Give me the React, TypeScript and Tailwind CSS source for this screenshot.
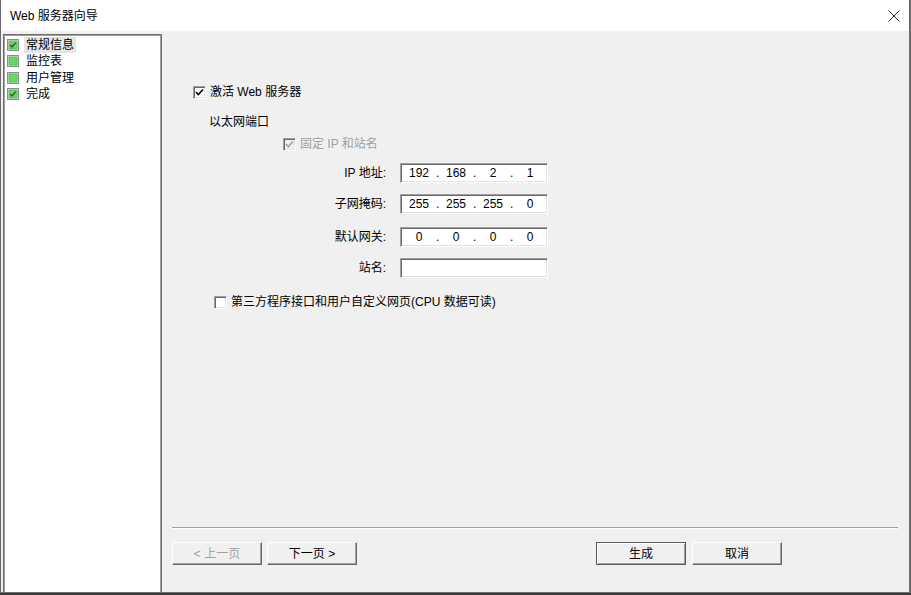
import type { ReactNode } from 'react';

const FONT = 'font-["Liberation_Sans","Noto_Sans_CJK_SC",sans-serif]';

function TreeIcon({ checked }: { checked: boolean }) {
  return (
    <svg width="12" height="12" viewBox="0 0 12 12" className="shrink-0">
      <rect x="0.5" y="0.5" width="11" height="11" fill="#d8d8d8" stroke="#8c8c8c" />
      <rect x="2" y="2" width="8" height="8" fill="#66d866" stroke="#3fae3f" strokeWidth="0.6" />
      {checked && <path d="M3.2 6 L5 7.9 L8.8 3.6" fill="none" stroke="#1f5f1f" strokeWidth="1.4" />}
    </svg>
  );
}

function TreeItem({ label, checked, selected }: { label: string; checked: boolean; selected?: boolean }) {
  return (
    <div className="flex items-center h-[16.3px] pl-[2px]">
      <TreeIcon checked={checked} />
      <span className={`ml-[5px] px-[2px] leading-[16px] ${selected ? 'bg-[#e5e5e5]' : ''}`}>{label}</span>
    </div>
  );
}

function CheckBox({ checked, disabled }: { checked: boolean; disabled?: boolean }) {
  return (
    <div
      className={`w-[13px] h-[13px] shrink-0 border border-t-[#a0a0a0] border-l-[#a0a0a0] border-r-white border-b-white shadow-[inset_1px_1px_0_#696969,inset_-1px_-1px_0_#e3e3e3] flex items-center justify-center ${
        disabled ? 'bg-[#f0f0f0]' : 'bg-white'
      }`}
    >
      {checked && (
        <svg width="9" height="9" viewBox="0 0 9 9">
          <path d="M1 4 L3.3 6.5 L8 1.5" fill="none" stroke={disabled ? '#a0a0a0' : '#000'} strokeWidth="1.6" />
        </svg>
      )}
    </div>
  );
}

function Field({ children }: { children?: ReactNode }) {
  return (
    <div className="w-[148px] h-[20px] bg-white border border-t-[#a0a0a0] border-l-[#a0a0a0] border-r-white border-b-white shadow-[inset_1px_1px_0_#696969,inset_-1px_-1px_0_#e3e3e3] flex items-center pl-[1px]">
      {children}
    </div>
  );
}

function IpField({ parts }: { parts: string[] }) {
  return (
    <Field>
      {parts.map((p, i) => (
        <div key={i} className="flex items-center">
          {i > 0 && <span className="w-[3px] text-center">.</span>}
          <span className="w-[34px] text-center">{p}</span>
        </div>
      ))}
    </Field>
  );
}

function FormRow({ label, children, className = '' }: { label: string; children: ReactNode; className?: string }) {
  return (
    <div className={`flex items-center h-[20px] ml-[139px] ${className}`}>
      <span className="w-[85px] text-right">{label}</span>
      <div className="ml-[14px]">{children}</div>
    </div>
  );
}

function Button({ label, disabled, isDefault }: { label: string; disabled?: boolean; isDefault?: boolean }) {
  return (
    <div
      className={`w-[90px] h-[23px] bg-[#f0f0f0] flex items-center justify-center ${
        isDefault
          ? 'border border-[#5a5a5a] shadow-[inset_1px_1px_0_#fff,inset_-1px_-1px_0_#a0a0a0]'
          : 'border border-t-white border-l-white border-r-[#696969] border-b-[#696969] shadow-[inset_-1px_-1px_0_#a0a0a0]'
      } ${disabled ? 'text-[#a0a0a0]' : 'text-black'}`}
    >
      {label}
    </div>
  );
}

export default function App() {
  return (
    <div className={`w-[911px] h-[595px] bg-[#3a3a3a] text-[12px] text-black ${FONT}`}>
      <div className="w-[911px] h-[593px] flex flex-col bg-white border-r-2 border-b border-l border-[#6b6b6b]">
        {/* title bar */}
        <div className="h-[31px] flex items-center justify-between pl-[9px] pr-[9px] bg-white">
          <span className="text-[12px]">Web 服务器向导</span>
          <svg width="12" height="12" viewBox="0 0 12 12">
            <path d="M0.5 0.5 L11.5 11.5 M11.5 0.5 L0.5 11.5" stroke="#222" strokeWidth="1" />
          </svg>
        </div>

        <div className="flex-1 flex bg-[#f0f0f0] pl-[2px] pt-[3px]">
          {/* tree panel */}
          <div className="w-[159px] bg-white border border-[#6d6d6d] border-b-0 shadow-[inset_1px_1px_0_#a0a0a0,inset_-1px_0_0_#a0a0a0] pt-[2px] pl-[1px]">
            <TreeItem label="常规信息" checked selected />
            <TreeItem label="监控表" checked={false} />
            <TreeItem label="用户管理" checked={false} />
            <TreeItem label="完成" checked />
          </div>

          {/* page */}
          <div className="flex-1 flex flex-col">
            <div className="flex items-center h-[16px] mt-[50px] ml-[31px]">
              <CheckBox checked />
              <span className="ml-[4px]">激活 Web 服务器</span>
            </div>
            <div className="h-[16px] leading-[16px] mt-[14px] ml-[47px]">以太网端口</div>
            <div className="flex items-center h-[16px] mt-[6px] ml-[121px]">
              <CheckBox checked disabled />
              <span className="ml-[4px] text-[#a0a0a0]">固定 IP 和站名</span>
            </div>

            <FormRow label="IP 地址:" className="mt-[11px]">
              <IpField parts={['192', '168', '2', '1']} />
            </FormRow>
            <FormRow label="子网掩码:" className="mt-[11px]">
              <IpField parts={['255', '255', '255', '0']} />
            </FormRow>
            <FormRow label="默认网关:" className="mt-[13px]">
              <IpField parts={['0', '0', '0', '0']} />
            </FormRow>
            <FormRow label="站名:" className="mt-[11px]">
              <Field />
            </FormRow>

            <div className="flex items-center h-[16px] mt-[16px] ml-[52px]">
              <CheckBox checked={false} />
              <span className="ml-[4px]">第三方程序接口和用户自定义网页(CPU 数据可读)</span>
            </div>

            <div className="flex-1" />

            <div className="ml-[10px] mr-[11px] h-[2px] border-t border-t-[#a0a0a0] border-b border-b-white" />

            <div className="flex mt-[13px] mb-[27px] ml-[10px]">
              <Button label="< 上一页" disabled />
              <div className="ml-[5px]">
                <Button label="下一页 >" />
              </div>
              <div className="ml-[239px]">
                <Button label="生成" isDefault />
              </div>
              <div className="ml-[6px]">
                <Button label="取消" />
              </div>
            </div>
          </div>
        </div>
      </div>
    </div>
  );
}
